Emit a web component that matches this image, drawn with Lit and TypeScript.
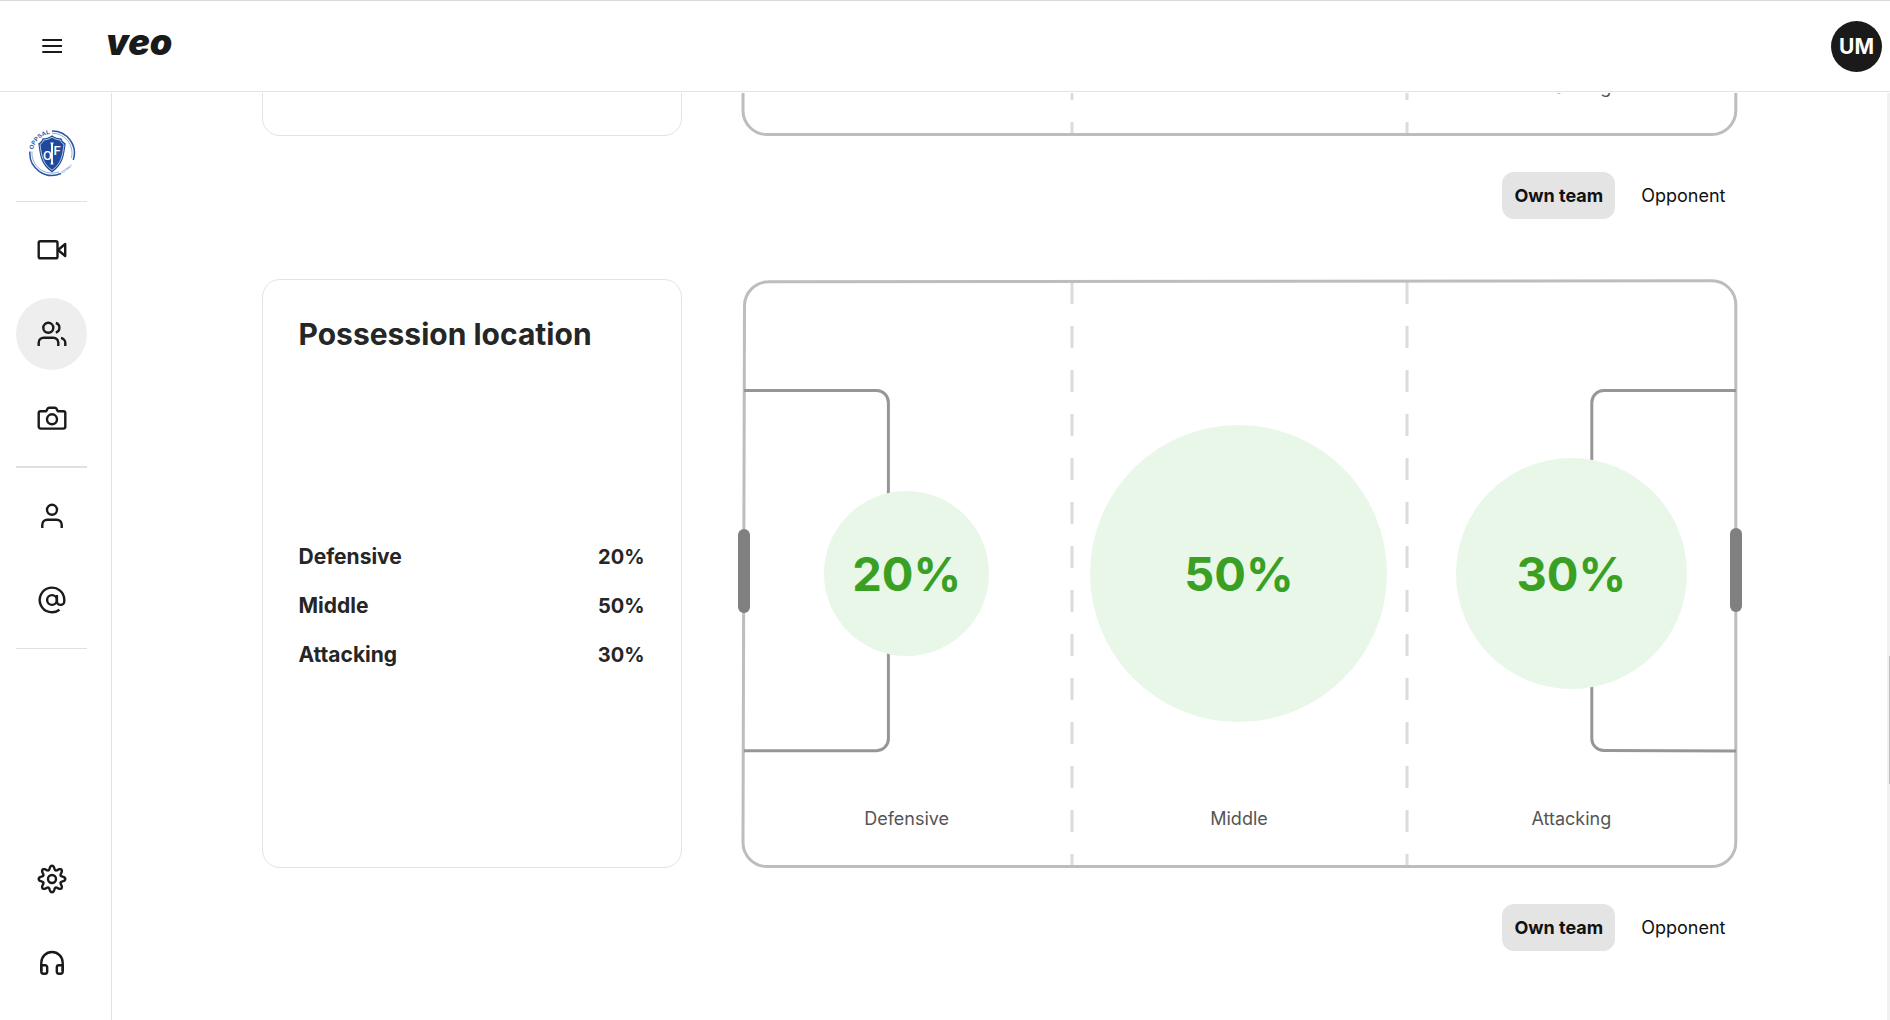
import { LitElement, html, svg, css, nothing } from "lit";
import type { SVGTemplateResult } from "lit";
import { customElement, property, state, query } from "lit/decorators.js";
import { classMap } from "lit/directives/class-map.js";
import { styleMap } from "lit/directives/style-map.js";

interface Zone {
  name: string;
  value?: number;
  size?: number;
}

interface NavItem {
  label: string;
  icon: string;
}

/** Closed cog outline whose radius swings between teeth and valleys. */
const cogPath = (() => {
  const pts: string[] = [];
  for (let i = 0; i < 128; i++) {
    const a = (i / 128) * Math.PI * 2;
    const wave = Math.cos(8 * a);
    const r = 11.3 + 2 * Math.sign(wave) * Math.pow(Math.abs(wave), 0.8);
    pts.push(`${(18 + r * Math.sin(a)).toFixed(2)} ${(18 - r * Math.cos(a)).toFixed(2)}`);
  }
  return `M${pts.join("L")}Z`;
})();

const icons: Record<string, SVGTemplateResult> = {
  video: svg`<rect x="4.7" y="9.3" width="18.8" height="17" rx="1.6"/><path d="M24 18l7.2-6v12z"/>`,
  users: svg`<circle cx="14.3" cy="11.8" r="5"/><path d="M21.8 7a5 5 0 0 1 0 9.6"/>
    <path d="M4.7 30v-3.3a5 5 0 0 1 5-5h9.6a5 5 0 0 1 5 5V30"/><path d="M27 22a5 5 0 0 1 4.3 5v3"/>`,
  camera: svg`<path d="M6.7 11.3h4.6a1.5 1.5 0 0 0 1.4-.9l.8-1.6a1.8 1.8 0 0 1 1.6-1h5.8a1.8 1.8 0 0 1 1.6 1l.8 1.6a1.5 1.5 0 0 0 1.4.9h4.6a2 2 0 0 1 2 2v13.3a2 2 0 0 1-2 2H6.7a2 2 0 0 1-2-2V13.3a2 2 0 0 1 2-2z"/>
    <circle cx="18" cy="19.3" r="5"/>`,
  person: svg`<circle cx="18" cy="11.8" r="5"/><path d="M8.3 30v-3.3a5 5 0 0 1 5-5h9.4a5 5 0 0 1 5 5V30"/>`,
  at: svg`<circle cx="18" cy="18" r="4.9"/><path d="M22.9 13.1v6.1a3.7 3.7 0 0 0 7.4 0V18a12.3 12.3 0 1 0-4.8 9.7"/>`,
  gear: svg`<path d=${cogPath}/><circle cx="18" cy="18" r="4"/>`,
  headphones: svg`<path d="M7.3 26V17.7a10.7 10.7 0 0 1 21.4 0V26"/>
    <path d="M7.3 20.3h3.7a2.2 2.2 0 0 1 2.2 2.2v4a2.2 2.2 0 0 1-2.2 2.2H9.5a2.2 2.2 0 0 1-2.2-2.2z"/>
    <path d="M28.7 20.3h-3.7a2.2 2.2 0 0 0-2.2 2.2v4a2.2 2.2 0 0 0 2.2 2.2h1.5a2.2 2.2 0 0 0 2.2-2.2z"/>`,
};

@customElement("stat-pitch")
export class StatPitch extends LitElement {
  @property({ attribute: false }) zones: Zone[] = [];

  static styles = css`
    :host {
      display: grid;
      aspect-ratio: 998 / 589;
    }
    .field,
    .zones {
      grid-area: 1 / 1;
      min-width: 0;
      min-height: 0;
    }
    .field {
      width: 100%;
      height: 100%;
      fill: none;
      stroke-width: 3;
      overflow: visible;
    }
    .outline {
      stroke: #bdbdbd;
    }
    .split {
      stroke: #dcdcdc;
      stroke-dasharray: 22 22;
    }
    .area {
      stroke: #969696;
    }
    .goal {
      fill: #808080;
    }
    .zones {
      display: grid;
      grid-template-columns: repeat(3, 1fr);
      padding-left: 1px;
    }
    .zone {
      display: grid;
      grid-template: 100% / 100%;
      justify-items: center;
    }
    .bubble,
    .label {
      grid-area: 1 / 1;
    }
    .bubble {
      align-self: center;
      display: grid;
      place-items: center;
      aspect-ratio: 1;
      border-radius: 50%;
      background: #e9f7e9;
      color: #3aa024;
      font-size: 47px;
      font-weight: 700;
    }
    .label {
      align-self: end;
      padding-bottom: 37px;
      font-size: 18px;
      line-height: 24px;
      color: #555;
    }
  `;

  render() {
    return html`
      <svg class="field" viewBox="0 0 998 589" aria-hidden="true">
        <path class="split" d="M332 3V586M667 3V586" />
        <path
          class="outline"
          d="M28 2.8L971.8 1.7A24 24 0 0 1 995.8 25.7V563.5A24 24 0 0 1 971.8 587.5H27A24 24 0 0 1 3 563.5L4.5 26.8A24 24 0 0 1 28.5 2.8"
        />
        <path class="area" d="M4 111.5H136.5A12 12 0 0 1 148.4 123.5V460A12 12 0 0 1 136.5 471.7H4" />
        <path class="area" d="M996 111.5H863.8A12 12 0 0 0 851.8 123.5V459.5A12 12 0 0 0 863.8 471.5L996 472" />
        <rect class="goal" x="-2" y="250" width="12" height="84" rx="6" />
        <rect class="goal" x="990" y="249" width="12" height="84" rx="6" />
      </svg>
      <div class="zones">
        ${this.zones.map(
          (z) => html`<div class="zone">
            ${z.value === undefined
              ? nothing
              : html`<div class="bubble" style=${styleMap({ width: `${z.size}px` })}>${z.value}%</div>`}
            <div class="label">${z.name}</div>
          </div>`
        )}
      </div>
    `;
  }
}

@customElement("stat-section")
export class StatSection extends LitElement {
  @property() heading = "";
  @property({ attribute: false }) zones: Zone[] = [];
  @state() private team = "Own team";

  static styles = css`
    :host {
      display: grid;
      grid-template-columns: 420fr 998fr;
      gap: 36px 58px;
    }
    .card {
      display: flex;
      flex-direction: column;
      box-sizing: border-box;
      padding: 36px;
      border: 1px solid #e3e3e3;
      border-radius: 18px;
      color: #262626;
    }
    .title {
      margin: 0 0 28px;
      font-size: 30px;
      line-height: 36px;
      font-weight: 700;
    }
    .stats {
      margin: auto 0;
      border-collapse: collapse;
      font-weight: 700;
    }
    .stats th,
    .stats td {
      height: 49px;
      padding: 0;
      font-weight: inherit;
    }
    .stats th {
      font-size: 21px;
      text-align: left;
    }
    .stats td {
      font-size: 20px;
      text-align: right;
    }
    .toggle {
      grid-column: 2;
      display: flex;
      justify-content: flex-end;
      gap: 14px;
    }
    .option {
      height: 47px;
      padding: 0 12px;
      border: 0;
      border-radius: 12px;
      background: none;
      color: #111;
      font: inherit;
      font-size: 18px;
      cursor: pointer;
    }
    .option.active {
      background: #e4e4e4;
      font-weight: 700;
    }
  `;

  render() {
    return html`
      <div class="card">
        ${this.heading
          ? html`<h2 class="title">${this.heading}</h2>
              <table class="stats">
                <tbody>
                  ${this.zones.map((z) => html`<tr><th scope="row">${z.name}</th><td>${z.value}%</td></tr>`)}
                </tbody>
              </table>`
          : nothing}
      </div>
      <stat-pitch .zones=${this.zones}></stat-pitch>
      <div class="toggle">
        ${["Own team", "Opponent"].map(
          (t) => html`<button
            type="button"
            class=${classMap({ option: true, active: this.team === t })}
            aria-pressed=${this.team === t}
            @click=${() => (this.team = t)}
          >${t}</button>`
        )}
      </div>
    `;
  }
}

@customElement("app-root")
export class AppRoot extends LitElement {
  @query(".content") private content!: HTMLElement;
  @state() private current = "users";

  private groups: NavItem[][] = [
    [
      { label: "Recordings", icon: "video" },
      { label: "Teams", icon: "users" },
      { label: "Clips", icon: "camera" },
    ],
    [
      { label: "Profile", icon: "person" },
      { label: "Mentions", icon: "at" },
    ],
    [
      { label: "Settings", icon: "gear" },
      { label: "Support", icon: "headphones" },
    ],
  ];

  private blank: Zone[] = [{ name: "Defensive" }, { name: "Middle" }, { name: "Attacking" }];
  private possession: Zone[] = [
    { name: "Defensive", value: 20, size: 165 },
    { name: "Middle", value: 50, size: 297 },
    { name: "Attacking", value: 30, size: 231 },
  ];

  static styles = css`
    :host {
      display: flex;
      flex-direction: column;
      height: 100vh;
      box-sizing: border-box;
      border-top: 1px solid #d9d9d9;
      overflow: hidden;
      background: #fff;
      color: #1a1a1a;
      font-family: Inter, "Liberation Sans", sans-serif;
    }
    .header {
      display: flex;
      align-items: center;
      flex: none;
      height: 90px;
      padding: 0 8px 0 34px;
      border-bottom: 1px solid #e4e4e4;
      margin-bottom: 1px;
    }
    button {
      padding: 0;
      border: 0;
      background: none;
      color: inherit;
      font: inherit;
      cursor: pointer;
    }
    .icon {
      display: block;
      width: 36px;
      height: 36px;
      fill: none;
      stroke: #1a1a1a;
      stroke-width: 2.4;
      stroke-linejoin: round;
    }
    .brand {
      margin-left: 36px;
      padding-bottom: 8px;
      color: #1a1a1a;
      font-family: Inter, "Open Sans", sans-serif;
      font-size: 36px;
      line-height: 48px;
      font-weight: 900;
      font-style: italic;
      text-decoration: none;
    }
    .avatar {
      width: 51px;
      height: 51px;
      margin-left: auto;
      border-radius: 50%;
      background: #1a1a1a;
      color: #fff;
      font-size: 21px;
      font-weight: 700;
    }
    .body {
      flex: 1;
      min-height: 0;
      display: flex;
    }
    .sidebar {
      display: flex;
      flex-direction: column;
      align-items: center;
      gap: 12px;
      flex: none;
      box-sizing: border-box;
      width: 112px;
      padding: 24px 24px 21px 16px;
      border-right: 1px solid #e2e2e2;
    }
    .club {
      width: 71px;
      height: 72px;
      display: grid;
      place-items: center;
    }
    .crest {
      width: 48px;
      height: 48px;
    }
    .rule {
      width: 71px;
      height: 1px;
      margin: 0;
      border: 0;
      background: #e0e0e0;
    }
    .rule.strong {
      height: 2px;
    }
    .group {
      display: flex;
      flex-direction: column;
      gap: 12px;
    }
    .group:last-child {
      margin-top: auto;
    }
    .nav {
      display: grid;
      place-items: center;
      width: 71px;
      height: 72px;
      border-radius: 50%;
    }
    .nav.active {
      background: #eee;
    }
    .content {
      flex: 1;
      min-width: 0;
      overflow-y: auto;
      scrollbar-width: none;
    }
    .column {
      display: flex;
      flex-direction: column;
      gap: 60px;
      max-width: 1476px;
      margin: 0 auto;
      padding-bottom: 69px;
    }
    .track {
      flex: none;
      display: flex;
      flex-direction: column;
      align-items: flex-end;
      width: 3px;
      background: #f1f1f1;
    }
    .track::before {
      content: "";
      flex: 563;
    }
    .track::after {
      content: "";
      flex: 236;
    }
    .thumb {
      flex: 128;
      width: 1px;
      background: #bdbdbd;
    }
  `;

  async firstUpdated() {
    const sections = [...this.content.querySelectorAll("stat-section")] as LitElement[];
    await Promise.all(sections.map((s) => s.updateComplete));
    this.content.scrollTop = this.content.scrollHeight;
  }

  private crest() {
    return html`<svg class="crest" viewBox="0 0 48 48" role="img" aria-label="Oppsal IF">
      <defs>
        <path id="rim-top" d="M5.2 20.8A19.2 19.2 0 0 1 30 5.8" />
        <path id="rim-low" d="M34 44.5A23 23 0 0 0 46.5 30" />
      </defs>
      <g fill="none" stroke="#2a56a3">
        <path d="M24 2A22.2 22.2 0 0 1 45.3 31" stroke-width="1.5" />
        <path d="M33 44.5A22.2 22.2 0 0 1 1.9 22.5" stroke-width="1.5" />
        <path d="M24 4.2A20 20 0 0 1 43.5 29" stroke-width=".5" />
        <path d="M31 42.8A20 20 0 0 1 4 22.5" stroke-width=".5" />
      </g>
      <path d="M24 6.2C21 9 16 9.4 14.6 9.2C14 11.5 12.5 13.3 10.3 14.5C12 27 13 36 24 43.5C35 36 36 27 37.7 14.5C35.5 13.3 34 11.5 33.4 9.2C32 9.4 27 9 24 6.2Z" fill="#1f4a9c" />
      <path d="M24 8.2C21 10.4 17 11 15.6 10.9C15 12.9 13.8 14.4 12 15.5C13.6 27 14.5 34.5 24 41.3C33.5 34.5 34.4 27 36 15.5C34.2 14.4 33 12.9 32.4 10.9C31 11 27 10.4 24 8.2Z" fill="none" stroke="#fff" stroke-width=".7" />
      <path d="M22.3 13.5H25.7L25 15.5L24.9 33L25.5 35.5H22.5L23.1 33L23 15.5Z" fill="#fff" />
      <text x="15" y="31" fill="#fff" font-family="Roboto, sans-serif" font-size="13" font-weight="500">O</text>
      <text x="25.5" y="26" fill="#fff" font-family="Roboto, sans-serif" font-size="13" font-weight="500">F</text>
      <text fill="#2a56a3" font-family="Liberation Sans, sans-serif" font-size="6" font-weight="700"><textPath href="#rim-top">OPPSAL</textPath></text>
      <text fill="#2a56a3" font-family="Liberation Sans, sans-serif" font-size="3"><textPath href="#rim-low">FOTBALL</textPath></text>
    </svg>`;
  }

  private group(items: NavItem[]) {
    return html`<div class="group">
      ${items.map(
        (n) => html`<button
          type="button"
          class=${classMap({ nav: true, active: this.current === n.icon })}
          aria-label=${n.label}
          @click=${() => (this.current = n.icon)}
        ><svg class="icon" viewBox="0 0 36 36" aria-hidden="true">${icons[n.icon]}</svg></button>`
      )}
    </div>`;
  }

  render() {
    return html`
      <header class="header">
        <button type="button" aria-label="Menu">
          <svg class="icon" viewBox="0 0 36 36" aria-hidden="true">
            <path d="M8.3 12H28M8.3 18H28M8.3 24H28" stroke-width="1.9" />
          </svg>
        </button>
        <a class="brand" href="#">veo</a>
        <button class="avatar" type="button">UM</button>
      </header>
      <div class="body">
        <nav class="sidebar">
          <button class="club" type="button">${this.crest()}</button>
          <hr class="rule" />
          ${this.group(this.groups[0])}
          <hr class="rule strong" />
          ${this.group(this.groups[1])}
          <hr class="rule" />
          ${this.group(this.groups[2])}
        </nav>
        <main class="content">
          <div class="column">
            <stat-section .zones=${this.blank}></stat-section>
            <stat-section .heading=${"Possession location"} .zones=${this.possession}></stat-section>
          </div>
        </main>
        <div class="track"><div class="thumb"></div></div>
      </div>
    `;
  }
}
